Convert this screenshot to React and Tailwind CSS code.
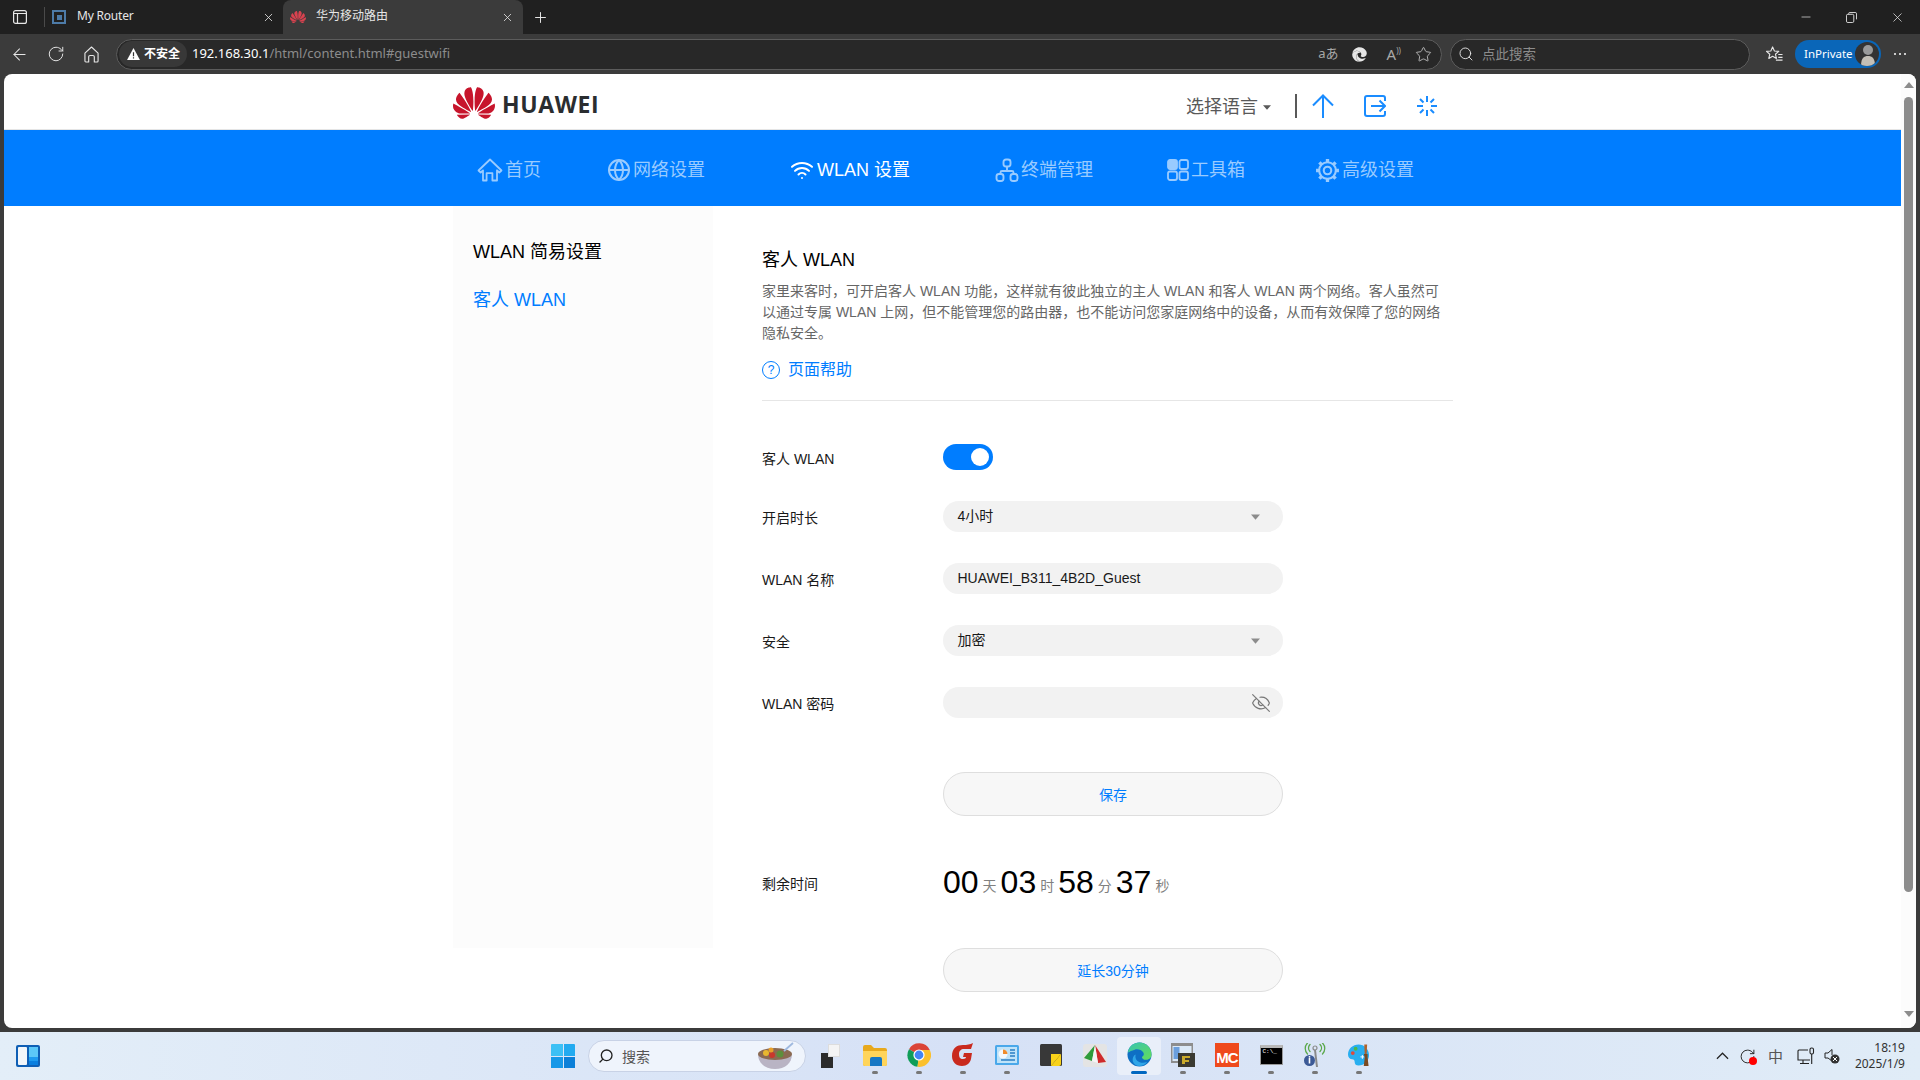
import React from "react";
import { SiHuawei } from "react-icons/si";
import { FaEdge } from "react-icons/fa";
import {
  ArrowLeft, RotateCw, Star, Search, X, Plus, Minus, EyeOff, Wifi, Globe,
} from "lucide-react";

const Tri = ({ className }) => (
  <svg viewBox="0 0 12 7" className={className}><path d="M0 0h12L6 7z" fill="currentColor" /></svg>
);

const HomeIcon = ({ className }) => (
  <svg viewBox="0 0 26 24" fill="none" stroke="currentColor" strokeWidth="1.8" strokeLinejoin="round" className={className}>
    <path d="M1.5 12.5 13 1.5l11.5 11-2.2 2-2.3-2.2V22.5h-4.6v-7.3h-5.8v7.3H6V12.300l-2.300 2.200z" />
  </svg>
);
const TerminalsIcon = ({ className }) => (
  <svg viewBox="0 0 24 24" fill="none" stroke="currentColor" strokeWidth="1.9" className={className}>
    <rect x="8.500" y="1.500" width="7" height="7" rx="2.500" />
    <path d="M12 8.500V13M5.500 16v-1.500a1.500 1.500 0 0 1 1.500-1.500h10a1.500 1.500 0 0 1 1.500 1.500V16" />
    <rect x="1.500" y="16" width="7" height="7" rx="2.500" />
    <rect x="15.500" y="16" width="7" height="7" rx="2.500" />
  </svg>
);
const ToolsIcon = ({ className }) => (
  <svg viewBox="0 0 22 22" fill="none" stroke="currentColor" strokeWidth="1.800" className={className}>
    <rect x="1" y="1" width="9" height="9" rx="2" fill="currentColor" />
    <rect x="12.500" y="1" width="8.500" height="9" rx="2" />
    <rect x="1" y="12.500" width="9" height="8.500" rx="2" />
    <rect x="12.500" y="12.500" width="8.500" height="8.500" rx="2" />
  </svg>
);
const GearIcon = ({ className }) => (
  <svg viewBox="0 0 24 24" fill="none" stroke="currentColor" className={className}>
    <circle cx="12" cy="12" r="8" strokeWidth="2" />
    <circle cx="12" cy="12" r="3.600" strokeWidth="2" />
    <g strokeWidth="3.200" strokeLinecap="butt">
      <path d="M12 1v3M12 20v3M1 12h3M20 12h3M4.200 4.200l2.200 2.200M17.600 17.600l2.200 2.200M4.200 19.800l2.200-2.200M17.600 6.400l2.200-2.200" />
    </g>
  </svg>
);

const navItems = [
  { Icon: HomeIcon, label: "首页", ic: "w-[26px] h-[24px]", m: "ml-0", g: "ml-[2px]" },
  { Icon: Globe, label: "网络设置", ic: "w-[24px] h-[24px]", m: "ml-[66px]", g: "ml-[2px]" },
  { Icon: Wifi, label: "WLAN 设置", ic: "w-[24px] h-[24px]", m: "ml-[85px]", g: "ml-[3px]", active: true },
  { Icon: TerminalsIcon, label: "终端管理", ic: "w-[24px] h-[24px]", m: "ml-[85px]", g: "ml-[2px]" },
  { Icon: ToolsIcon, label: "工具箱", ic: "w-[22px] h-[22px]", m: "ml-[74px]", g: "ml-[2px]" },
  { Icon: GearIcon, label: "高级设置", ic: "w-[25px] h-[25px]", m: "ml-[70px]", g: "ml-[2px]" },
];

const Label = ({ children }) => (
  <div className="w-[181px] text-[14px] leading-[20px] text-[#191919] pt-[3px]">{children}</div>
);

const Row = ({ label, children, cls = "mt-[31px]" }) => (
  <div className={`flex items-center ${cls}`}>
    <Label>{label}</Label>
    {children}
  </div>
);

const Field = ({ children }) => (
  <div className="w-[340px] h-[31px] rounded-full bg-[#f2f2f2] flex items-center pl-[14.5px] pr-[15px] text-[14px] text-[#191919]">
    {children}
  </div>
);

const Btn = ({ children }) => (
  <button className="w-[340px] h-[44px] rounded-full bg-[#f7f7f7] border border-[#dedede] text-[14px] text-[#007dff] flex items-center justify-center pt-[2px]">
    {children}
  </button>
);

const Count = ({ n, u, first }) => (
  <div className={`flex items-baseline ${first ? "" : "ml-[4px]"}`}>
    <span className="text-[32px] leading-[40px] text-black">{n}</span>
    <span className="ml-[4px] text-[14px] text-[#808080] -translate-y-[2px]">{u}</span>
  </div>
);

/* taskbar glyphs */
const Explorer = () => (
  <svg viewBox="0 0 24 22" className="w-[24px] h-[22px]">
    <path d="M0 3a2 2 0 0 1 2-2h6l3 3h11a2 2 0 0 1 2 2v14a2 2 0 0 1-2 2H2a2 2 0 0 1-2-2z" fill="#e8a91c" />
    <path d="M0 7h24v13a2 2 0 0 1-2 2H2a2 2 0 0 1-2-2z" fill="#ffd45a" />
    <path d="M7 15a2 2 0 0 1 2-2h8a2 2 0 0 1 2 2v7H7z" fill="#1677c4" />
  </svg>
);
const Chrome = () => (
  <svg viewBox="0 0 24 24" className="w-[24px] h-[24px]">
    <path d="M12 12 2 6.200A11.800 11.800 0 0 1 22.800 7H12z" fill="#db4437" />
    <path d="M12 12 2 6.200A11.800 11.800 0 0 0 10.500 23.800z" fill="#0f9d58" />
    <path d="M12 7h10.800A11.800 11.800 0 0 1 10.500 23.800L12 12z" fill="#fbc02d" />
    <circle cx="12" cy="12" r="5.600" fill="#fff" />
    <circle cx="12" cy="12" r="4.400" fill="#4285f4" />
  </svg>
);
const RedG = () => (
  <svg viewBox="0 0 22 24" className="w-[22px] h-[24px]">
    <path d="M21 0l-2 6h-7c-3 0-5 2-5 5 0 3 1 5 4 5 2 0 3-1 3-2h-3l1-4h8l-1 6c-1 4-4 7-9 7-6 0-10-4-10-10C0 5 5 2 11 2c4 0 7-.500 10-2z" fill="#c92a1e" />
  </svg>
);
const ChartApp = () => (
  <svg viewBox="0 0 24 20" className="w-[24px] h-[20px]">
    <rect width="24" height="20" rx="1.500" fill="#4aa8ea" />
    <rect x="2" y="2" width="20" height="16" fill="#bfe3f9" />
    <circle cx="8" cy="9" r="4.500" fill="#f4f9fd" />
    <path d="M8 9V4.500A4.500 4.500 0 0 1 12.500 9z" fill="#ef8c2d" />
    <path d="M15 5h5M15 8h5M15 11h5M6 15h14" stroke="#2b7fc4" strokeWidth="1.400" />
  </svg>
);
const Sticky = () => (
  <svg viewBox="0 0 22 22" className="w-[22px] h-[22px]">
    <rect width="22" height="22" rx="1.500" fill="#383838" />
    <path d="M11 22 21 10v10a2 2 0 0 1-2 2z" fill="#f9d21a" />
    <path d="M11 22l10-12H11z" fill="#f9d21a" />
  </svg>
);
const Faststone = () => (
  <svg viewBox="0 0 24 24" className="w-[24px] h-[24px]">
    <rect y="1" width="24" height="23" rx="3" fill="#e4e4e4" />
    <path d="M12 2 1 15l8 3z" fill="#2f9b3a" />
    <path d="M12 2l11 17-8 1z" fill="#cf2a2a" />
    <path d="M12 2 9 18l6 2z" fill="#f5f5f5" />
  </svg>
);
const EdgeColor = () => (
  <svg viewBox="0 0 26 26" className="w-[25px] h-[25px]">
    <defs>
      <linearGradient id="eg1" x1="0" y1="0" x2="1" y2="1"><stop offset="0" stopColor="#37c4b0" /><stop offset="1" stopColor="#63dc5c" /></linearGradient>
    </defs>
    <circle cx="13" cy="13" r="12.500" fill="#0e6fc4" />
    <path d="M1 11C2 4 7 .500 13 .500 20 .500 25.500 6 25.500 13c0 3-2 5.500-5.500 5.500-3 0-4.500-1.500-4.500-3 2-1 2.500-2.500 1.500-4.500C15 8 11 7 8 8c-3 .800-5.500 2-7 3z" fill="url(#eg1)" />
    <path d="M9 13c-1 4 1 7.500 6 8.500 2 .300 4 0 6-1-2 3-5 4.500-8 4.500-3.500 0-6-2-7-5-.500-3 .500-6 3-7z" fill="#2fa6e8" />
  </svg>
);
const Windows2 = () => (
  <svg viewBox="0 0 24 24" className="w-[24px] h-[24px]">
    <rect width="22" height="20" fill="#8d8d8d" />
    <rect x="1.500" y="3" width="19" height="15" fill="#dbe9f7" />
    <rect x="2.500" y="4" width="6" height="12" fill="#6b9fdd" />
    <rect x="7" y="10" width="17" height="14" fill="#3a3a32" />
    <path d="M11 13h8v2h-5v2h4v2h-4v2h-3z" fill="#c8aa2c" />
  </svg>
);
const MCApp = () => (
  <div className="w-[24px] h-[24px] bg-[#ef4a1c] flex items-end justify-center overflow-hidden">
    <span className="text-[15px] leading-[18px] font-bold text-white tracking-[-1px] font-['Liberation_Sans',sans-serif]">MC</span>
  </div>
);
const Term = () => (
  <div className="w-[23px] h-[20px] bg-black border border-[#9a9a9a] border-t-[3px] border-t-[#b8b8b8] pl-[2px]">
    <span className="block text-[6px] leading-[8px] text-white font-['Liberation_Mono',monospace]">C:\_</span>
  </div>
);
const Tower = () => (
  <svg viewBox="0 0 22 24" className="w-[22px] h-[24px]">
    <g fill="none" stroke="#5aa84a" strokeWidth="1.300" strokeLinecap="round">
      <path d="M6 1.500c-2 2-2 5 0 7M3.500 0c-3 3-3 8 0 11M16 1.500c2 2 2 5 0 7M18.500 0c3 3 3 8 0 11" />
    </g>
    <circle cx="11" cy="5" r="2" fill="none" stroke="#8a8a8a" strokeWidth="1.200" />
    <path d="M11 7l2 17" stroke="#8a8a8a" strokeWidth="2" />
    <circle cx="5.500" cy="17.500" r="5.500" fill="#3c5a96" />
    <path d="M5.500 15v5.500" stroke="#fff" strokeWidth="1.600" />
    <circle cx="5.500" cy="13.800" r=".9" fill="#fff" />
  </svg>
);
const Palette = () => (
  <svg viewBox="0 0 23 24" className="w-[22px] h-[24px]">
    <path d="M11 1C5 1 0 5.500 0 11.500c0 3 2 5 4.500 5 2 0 2.500 1.500 2.500 3 0 2 1.500 3.500 4 3.500 6 0 11-5 11-11S17 1 11 1z" fill="#28aef0" />
    <circle cx="5" cy="10" r="2" fill="#e04a3a" /><circle cx="8" cy="5.500" r="2" fill="#4bb84a" />
    <path d="M13 14h4m-2-2v4" stroke="#fff" strokeWidth="1" />
    <path d="M17 1h3l-.500 10h-2z" fill="#b0622a" /><path d="M16.500 11h4v3.500l1 9h-5l1-9z" fill="#7a4a22" />
  </svg>
);

const tasks = [
  { el: <Explorer /> }, { el: <Chrome /> }, { el: <RedG /> }, { el: <ChartApp /> },
  { el: <Sticky />, nodot: true }, { el: <Faststone />, nodot: true }, { el: <EdgeColor />, active: true },
  { el: <Windows2 /> }, { el: <MCApp /> }, { el: <Term /> }, { el: <Tower /> }, { el: <Palette /> },
];

export default function App() {
  return (
    <div className="w-[1920px] h-[1080px] overflow-hidden flex flex-col bg-[#3b3b3b] font-['Liberation_Sans','Noto_Sans_CJK_SC',sans-serif]">
      {/* tabs */}
      <div className="h-[34px] bg-[#202020] flex items-stretch text-[#e6e6e6] text-[12px] font-['Noto_Sans','Noto_Sans_CJK_SC',sans-serif]">
        <div className="w-[44px] flex items-center justify-center">
          <svg viewBox="0 0 14 14" className="w-[14px] h-[14px] ml-[-4px]" fill="none" stroke="#e6e6e6" strokeWidth="1.200">
            <rect x=".6" y=".6" width="12.800" height="12.800" rx="2" /><path d="M.6 3.500h12.800M4.500 3.500v9.900" />
          </svg>
        </div>
        <div className="w-[1px] h-[20px] bg-[#4a4a4a] self-center" />
        <div className="w-[238px] flex items-center pl-[7px]">
          <div className="w-[14px] h-[14px] border-[2px] border-[#4d7ba8] flex items-center justify-center">
            <div className="w-[5px] h-[5px] bg-[#4d7ba8]" />
          </div>
          <span className="ml-[11px] pb-[2px] tracking-[-0.2px]">My Router</span>
          <X size={13} strokeWidth={1.5} className="ml-auto mr-[8px]" />
        </div>
        <div className="w-[240px] bg-[#3b3b3b] rounded-t-[8px] flex items-center pl-[7px]">
          <SiHuawei size={16} className="text-[#d9424f]" />
          <span className="ml-[10px] pb-[2px]">华为移动路由</span>
          <X size={13} strokeWidth={1.5} className="ml-auto mr-[9px]" />
        </div>
        <Plus size={17} strokeWidth={1.4} className="self-center ml-[9px]" />
        <div className="ml-auto flex items-center">
          <Minus size={14} strokeWidth={1.2} className="mr-[33px]" />
          <svg viewBox="0 0 12 12" className="w-[11px] h-[11px] mr-[33px]" fill="none" stroke="#e6e6e6"><rect x=".5" y="2.500" width="8" height="9" rx="1.500" /><path d="M3 2.500V1.500a1 1 0 0 1 1-1h6a1.500 1.500 0 0 1 1.500 1.500V8" /></svg>
          <X size={15} strokeWidth={1.2} className="mr-[15px]" />
        </div>
      </div>

      {/* toolbar */}
      <div className="h-[40px] bg-[#3b3b3b] flex items-center text-[#e6e6e6] font-['Noto_Sans','Noto_Sans_CJK_SC',sans-serif]">
        <ArrowLeft size={19} strokeWidth={1.3} className="ml-[10px]" />
        <RotateCw size={18} strokeWidth={1.3} className="ml-[18px]" />
        <svg viewBox="0 0 16 18" className="w-[15px] h-[17px] ml-[19px]" fill="none" stroke="#e6e6e6" strokeWidth="1.200" strokeLinejoin="round"><path d="M1 7.500 8 1l7 6.500V16a1 1 0 0 1-1 1h-3v-5.500a1.500 1.500 0 0 0-1.500-1.500h-3A1.500 1.500 0 0 0 5 11.500V17H2a1 1 0 0 1-1-1z" /></svg>
        <div className="ml-[17px] w-[1326px] h-[31px] rounded-full bg-[#282828] border border-[#5c5c5c] flex items-center pl-[2px] pr-[9px]">
          <div className="h-[26px] w-[68px] rounded-full bg-[#383838] flex items-center pl-[8px]">
            <svg viewBox="0 0 14 13" className="w-[13px] h-[12px]"><path d="M7 0l7 13H0z" fill="#fff" /><path d="M7 4.500v4.500M7 10v1.500" stroke="#333" strokeWidth="1.300" /></svg>
            <span className="ml-[4px] text-[12px] font-bold text-white whitespace-nowrap">不安全</span>
          </div>
          <span className="ml-[5px] text-[13px] text-white whitespace-nowrap">192.168.30.1<span className="text-[#8c8c8c]">/html/content.html#guestwifi</span></span>
          <span className="ml-auto mr-[1px] text-[13px] text-[#a8a8a8] whitespace-nowrap">aあ</span>
          <FaEdge size={15} className="ml-[12px] text-[#e6e6e6]" />
          <span className="ml-[20px] text-[15px] leading-none text-[#a8a8a8]">A</span>
          <span className="text-[8px] leading-none text-[#a8a8a8] mb-[6px]">))</span>
          <Star size={17} strokeWidth={1.2} className="ml-[14px] text-[#c8c8c8]" />
        </div>
        <div className="ml-[8px] w-[300px] h-[31px] rounded-full bg-[#282828] border border-[#5c5c5c] flex items-center pl-[7px]">
          <Search size={16} strokeWidth={1.4} />
          <span className="ml-[8px] text-[13.5px] text-[#8c8c8c]">点此搜索</span>
        </div>
        <svg viewBox="0 0 18 18" className="w-[17px] h-[17px] ml-[16px]" fill="none" stroke="#e6e6e6" strokeWidth="1.200" strokeLinejoin="round"><path d="M7 1l1.900 4.300 4.600.4-3.500 3 1 4.500L7 10.900 3 13.200l1-4.500L.5 5.700l4.600-.4z" /><path d="M13 9h4.500M13 12h4.500M10.500 15h7" /></svg>
        <div className="ml-[12px] w-[86px] h-[28px] rounded-full bg-[#0a66b8] flex items-center pl-[9px] pr-[2px]">
          <span className="text-[11.5px] text-white whitespace-nowrap">InPrivate</span>
          <div className="ml-auto w-[24px] h-[24px] rounded-full bg-[#333] flex items-center justify-center overflow-hidden">
            <svg viewBox="0 0 24 24" className="w-[24px] h-[24px]"><circle cx="13" cy="8" r="5" fill="#9a9a9a" /><path d="M6 24c0-8 3-10 7-10s7 2 7 10z" fill="#c4bfb6" /></svg>
          </div>
        </div>
        <div className="ml-[13px] flex gap-[3px]">
          <div className="w-[2px] h-[2px] rounded-full bg-white" /><div className="w-[2px] h-[2px] rounded-full bg-white" /><div className="w-[2px] h-[2px] rounded-full bg-white" />
        </div>
      </div>

      {/* browser viewport */}
      <div className="h-[954px] mx-[4px] bg-white rounded-[8px] flex overflow-hidden">
        <div className="w-[1897px] flex flex-col">
          {/* header */}
          <div className="h-[56px] border-b border-[#e5e5e5] flex items-center pl-[449px] pt-[8px]">
            <div className="w-[733px] flex items-center">
              <SiHuawei size={42} className="text-[#c7152c] mb-[6px]" />
              <span className="ml-[7px] mb-[3px] text-[23px] font-bold tracking-[0.6px] text-[#2a2d30] font-['Open_Sans',sans-serif] leading-none">HUAWEI</span>
            </div>
            <span className="mt-[4px] text-[18px] text-[#595959]">选择语言</span>
            <Tri className="mt-[4px] w-[8px] h-[5px] ml-[5px] text-[#595959]" />
            <div className="w-[2px] h-[24px] bg-[#595959] ml-[24px]" />
            <svg viewBox="0 0 22 24" className="w-[22px] h-[24px] ml-[15px]" fill="none" stroke="#1a8cff" strokeWidth="2"><path d="M11 24V1.500M1 11.500 11 1.500l10 10" /></svg>
            <svg viewBox="0 0 22 22" className="w-[22px] h-[22px] ml-[30px]" fill="none" stroke="#1a8cff" strokeWidth="2"><path d="M21 6V3a2 2 0 0 0-2-2H3a2 2 0 0 0-2 2v16a2 2 0 0 0 2 2h16a2 2 0 0 0 2-2v-3M7 11h14M15.500 5.500 21 11l-5.500 5.500" /></svg>
            <svg viewBox="0 0 22 22" className="w-[22px] h-[22px] ml-[30px]" fill="none" stroke="#1a8cff" strokeWidth="2"><path d="M11 1v6M11 15v6M1 11h6M15 11h6M4 4l3.500 3.500M14.500 14.500 18 18M4 18l3.500-3.500M14.500 7.500 18 4" /></svg>
          </div>
          {/* nav */}
          <div className="h-[76px] bg-[#007dff] flex items-center pl-[473px] pt-[4px] text-[18px]">
            {navItems.map(({ Icon, label, ic, m, g, active }) => (
              <div key={label} className={`flex items-center ${m} ${active ? "text-white" : "text-[#99cbff]"}`}>
                <Icon className={ic} />
                <span className={`${g} whitespace-nowrap`}>{label}</span>
              </div>
            ))}
          </div>
          {/* body */}
          <div className="flex flex-1 items-start overflow-hidden">
            <div className="ml-[449px] w-[260px] h-[742px] bg-[#fcfcfc] pl-[20px] pt-[32px] text-[18px]">
              <div className="leading-[28px] text-black">WLAN 简易设置</div>
              <div className="leading-[28px] mt-[20px] text-[#007dff]">客人 WLAN</div>
            </div>
            <div className="ml-[49px] w-[691px] pt-[40px]">
              <div className="text-[18px] leading-[28px] text-black">客人 WLAN</div>
              <p className="mt-[7px] text-[14px] leading-[21px] text-[#666] whitespace-nowrap">
                家里来客时，可开启客人 WLAN 功能，这样就有彼此独立的主人 WLAN 和客人 WLAN 两个网络。客人虽然可<br />
                以通过专属 WLAN 上网，但不能管理您的路由器，也不能访问您家庭网络中的设备，从而有效保障了您的网络<br />
                隐私安全。
              </p>
              <div className="mt-[14px] h-[24px] flex items-center text-[16px] text-[#007dff]">
                <div className="w-[18px] h-[18px] rounded-full border border-[#007dff] flex items-center justify-center text-[12px] leading-none">?</div>
                <span className="ml-[8px]">页面帮助</span>
              </div>
              <div className="mt-[18px] h-[1px] bg-[#e6e6e6]" />

              <Row label="客人 WLAN" cls="mt-[43px]">
                <div className="w-[50px] h-[26px] rounded-full bg-[#007dff] flex items-center justify-end pr-[4px]">
                  <div className="w-[18px] h-[18px] rounded-full bg-white" />
                </div>
              </Row>
              <Row label="开启时长">
                <Field>4小时<Tri className="ml-auto mr-[8px] w-[9px] h-[6px] text-[#8c8c8c]" /></Field>
              </Row>
              <Row label="WLAN 名称">
                <Field>HUAWEI_B311_4B2D_Guest</Field>
              </Row>
              <Row label="安全">
                <Field>加密<Tri className="ml-auto mr-[8px] w-[9px] h-[6px] text-[#8c8c8c]" /></Field>
              </Row>
              <Row label="WLAN 密码">
                <Field><EyeOff size={20} strokeWidth={1.4} className="ml-auto mr-[-3px] text-[#777]" /></Field>
              </Row>

              <div className="mt-[54px] ml-[181px]"><Btn>保存</Btn></div>

              <div className="mt-[44px] h-[44px] flex items-center">
                <Label>剩余时间</Label>
                <div className="flex items-baseline">
                  <Count n="00" u="天" first />
                  <Count n="03" u="时" />
                  <Count n="58" u="分" />
                  <Count n="37" u="秒" />
                </div>
              </div>

              <div className="mt-[44px] ml-[181px]"><Btn>延长30分钟</Btn></div>
            </div>
          </div>
        </div>
        {/* scrollbar */}
        <div className="w-[15px] bg-[#fcfcfc] flex flex-col items-center pt-[8px]">
          <Tri className="w-[10px] h-[6px] rotate-180 text-[#8c8c8c]" />
          <div className="w-[9px] h-[795px] mt-[9px] rounded-full bg-[#8c8c8c]" />
          <Tri className="w-[10px] h-[6px] mt-[119px] text-[#8c8c8c]" />
        </div>
      </div>

      <div className="h-[4px]" />

      {/* taskbar */}
      <div className="h-[48px] bg-gradient-to-r from-[#e3eef8] via-[#d6e1f6] to-[#e0ecf7] flex items-center text-[#1f1f1f] font-['Noto_Sans','Noto_Sans_CJK_SC',sans-serif]">
        <div className="ml-[16px] w-[24px] h-[22px] bg-[#0f5fb5] rounded-[2px] flex gap-[2px] p-[2px]">
          <div className="w-[9px] h-full bg-[#f2f6fa] rounded-[1px]" />
          <div className="w-[9px] h-full flex flex-col">
            <div className="h-[10px] bg-[#5cc8f8]" /><div className="h-[4px] bg-[#1e9bf0]" /><div className="h-[4px] bg-[#0a7fe0]" />
          </div>
        </div>
        <div className="ml-[511px] w-[24px] h-[24px] grid grid-cols-2 gap-[1px]">
          <div className="bg-[#3cc0f5] rounded-tl-[1px]" /><div className="bg-[#22aaf0] rounded-tr-[1px]" />
          <div className="bg-[#1698e8]" /><div className="bg-[#0b7fd8]" />
        </div>
        <div className="ml-[13px] w-[218px] h-[32px] rounded-full bg-[#eff4fc] border border-[#c8d2e6] flex items-center pl-[9px]">
          <Search size={16} strokeWidth={2} className="-scale-x-100 text-[#222]" />
          <span className="ml-[8px] text-[14px] text-[#555]">搜索</span>
          <svg viewBox="0 0 38 28" className="ml-auto mr-[10px] w-[38px] h-[28px]">
            <path d="M1 12h34c0 9-7 15-17 15S1 21 1 12z" fill="#b9b4c4" />
            <ellipse cx="18" cy="12" rx="17" ry="6" fill="#8b6a52" />
            <circle cx="9" cy="11" r="3" fill="#e8b72f" /><circle cx="15" cy="13" r="3" fill="#c9382c" /><circle cx="23" cy="12" r="3.500" fill="#5d8f3c" /><circle cx="14" cy="8" r="2.500" fill="#e9a02a" />
            <path d="M27 9 36 1" stroke="#9fb9df" strokeWidth="1.800" />
          </svg>
        </div>
        <div className="w-[47px] flex justify-center">
          <div className="w-[20px] h-[24px] flex items-start mr-[2px]">
            <div className="flex flex-col items-end w-full">
              <div className="w-[12px] h-[13px] bg-[#f4f4f4] border border-[#ddd] mb-[-4px] mr-[-1px] z-10" />
              <div className="w-[12px] h-[15px] bg-[#2b2b2b] mr-[6px]" />
            </div>
          </div>
        </div>
        {tasks.map((t, i) => (
          <div key={i} className={`w-[44px] h-[38px] flex flex-col items-center justify-start pt-[5px] rounded-[4px] ${t.active ? "bg-[#e9eff9]" : ""}`}>
            <div className="h-[25px] flex items-center justify-center">{t.el}</div>
            <div className={`mt-[4px] h-[3px] rounded-full ${t.active ? "w-[16px] bg-[#0067c0]" : t.nodot ? "w-[6px] bg-transparent" : "w-[6px] bg-[#777]"}`} />
          </div>
        ))}
        <svg viewBox="0 0 14 8" className="ml-[335px] w-[13px] h-[8px]" fill="none" stroke="#222" strokeWidth="1.300"><path d="M1 7 7 1l6 6" /></svg>
        <div className="ml-[9px] w-[18px] h-[18px] flex items-center justify-center relative">
          <RotateCw size={17} strokeWidth={1.3} />
          <div className="absolute right-[-1px] bottom-[0px] w-[8px] h-[8px] rounded-full bg-[#f00]" />
        </div>
        <span className="ml-[12px] text-[15px] text-[#555] leading-[16px]">中</span>
        <svg viewBox="0 0 18 18" className="ml-[14px] w-[18px] h-[18px]" fill="none" stroke="#222" strokeWidth="1.100"><path d="M11 3H2a1 1 0 0 0-1 1v9h12M6 13v3.500M3 16.500h9" /><rect x="13" y="1" width="3.500" height="6" rx="1.500" /><path d="M14.700 7v10" /></svg>
        <svg viewBox="0 0 16 16" className="ml-[9px] w-[16px] h-[16px]"><path d="M1 5h3l4-3.500V7M8 13 4 10H1V5" fill="none" stroke="#222" strokeWidth="1" /><circle cx="11" cy="11" r="4.500" fill="#333" /><path d="M9 9l4 4m0-4-4 4" stroke="#fff" strokeWidth="1" /></svg>
        <div className="ml-auto mr-[15px] text-right text-[12px] leading-[16px] text-[#333]">
          <div>18:19</div>
          <div>2025/1/9</div>
        </div>
      </div>
    </div>
  );
}
